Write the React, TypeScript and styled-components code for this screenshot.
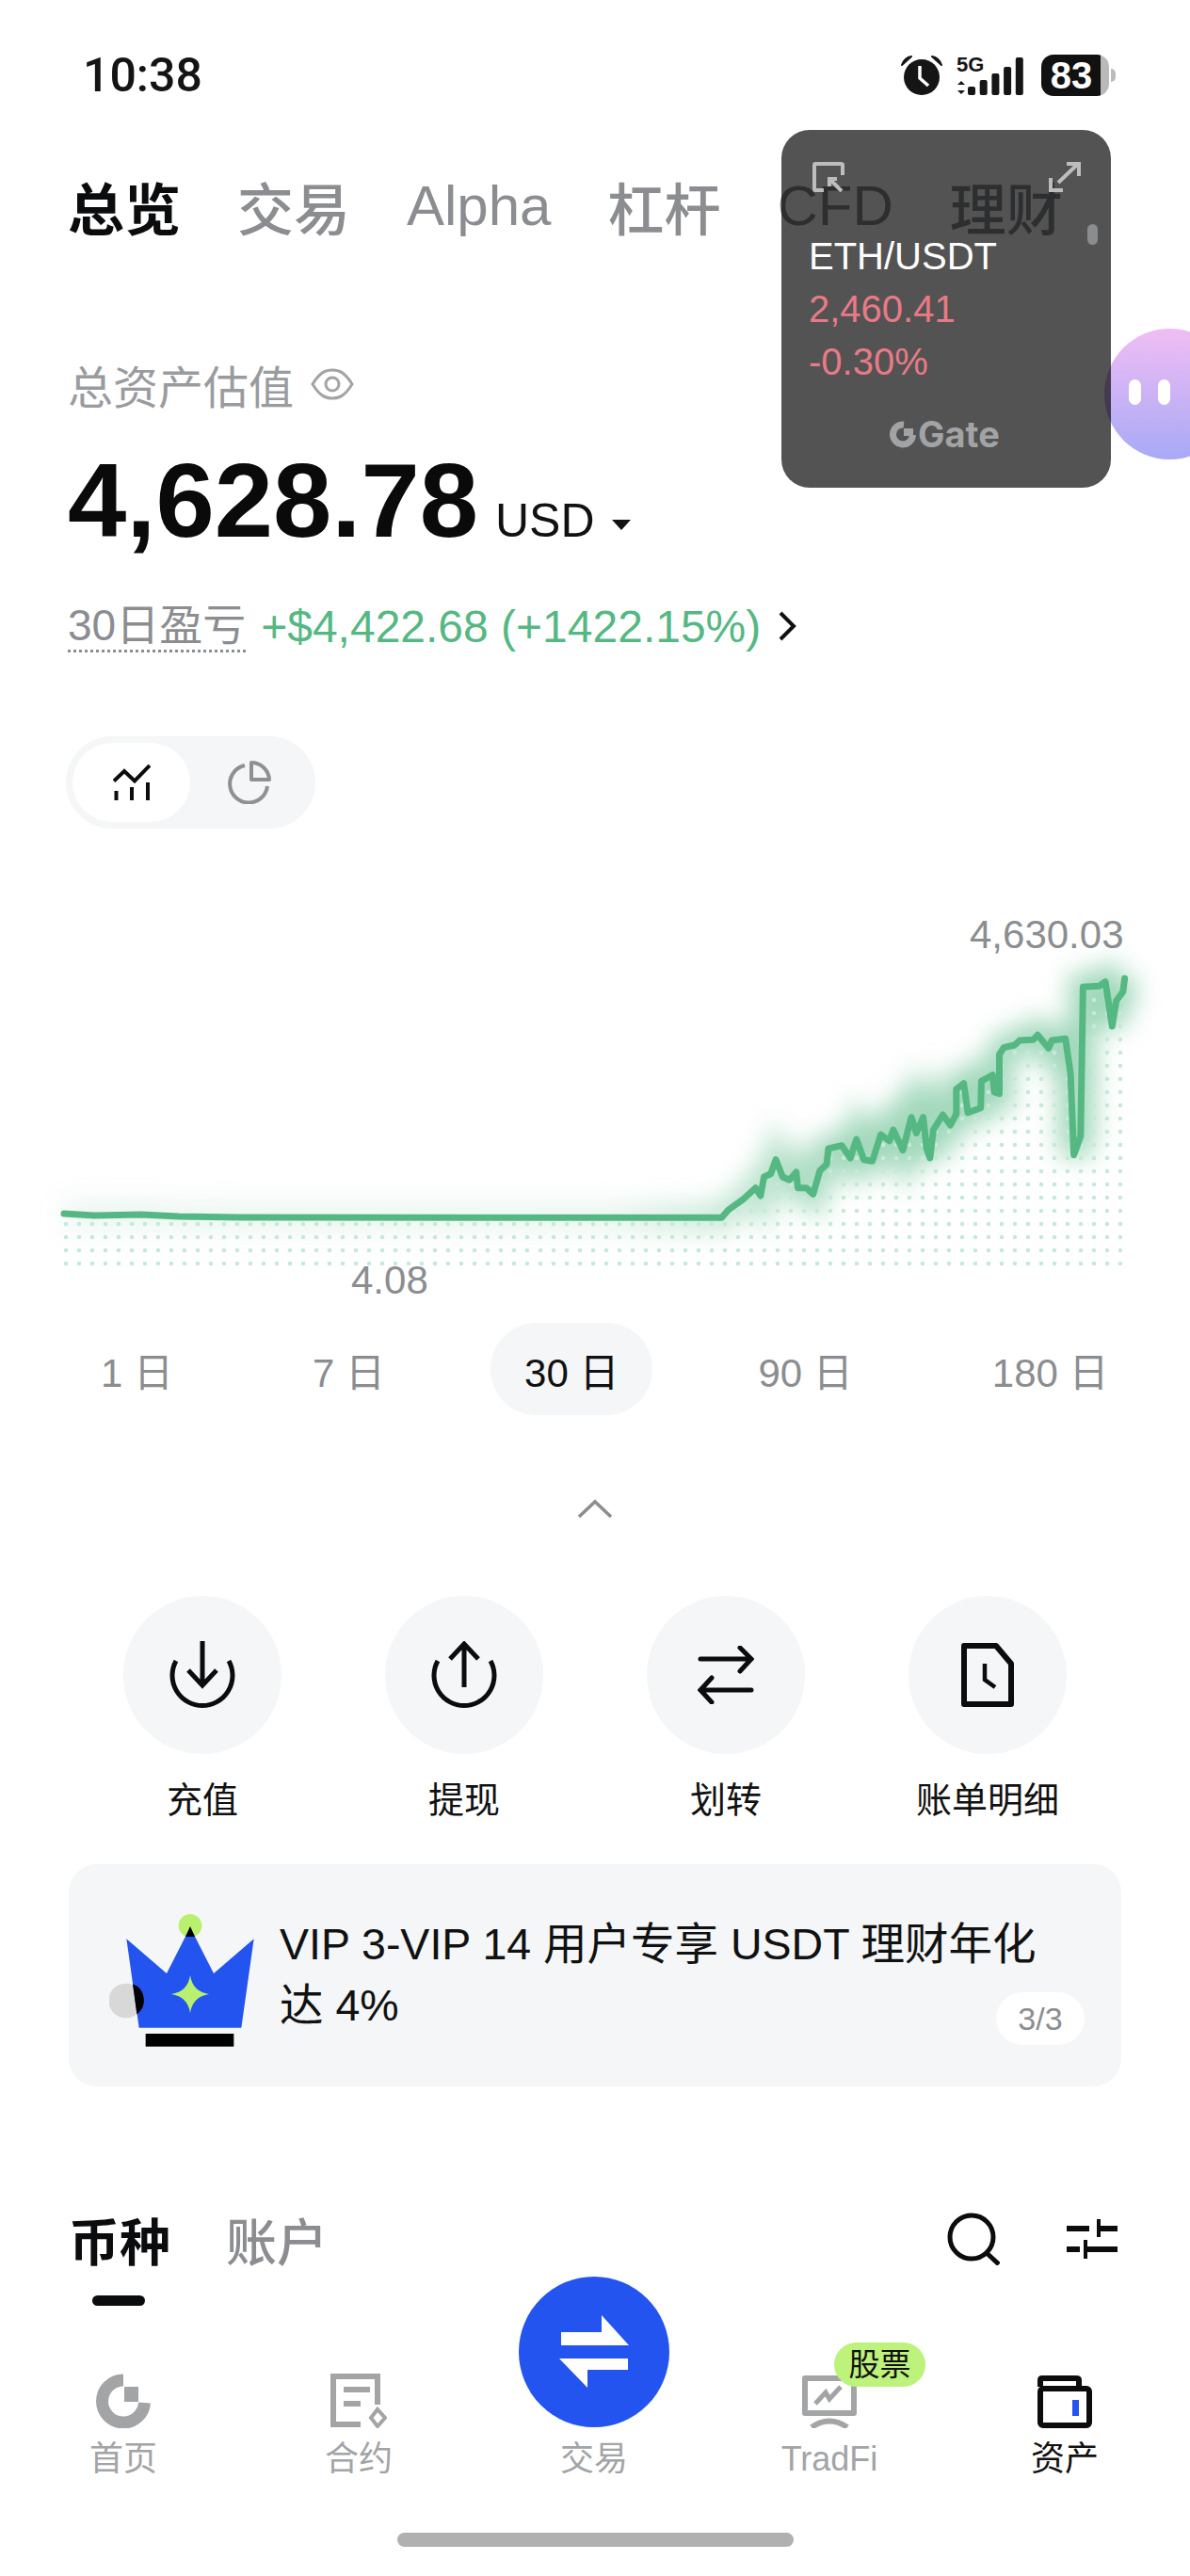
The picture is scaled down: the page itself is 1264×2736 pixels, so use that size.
import React from "react";
import styled, { createGlobalStyle } from "styled-components";

const SANS = `"Liberation Sans", "Noto Sans CJK SC", sans-serif`;
const GREY = "#8b8d90";
const GREEN = "#55b883";

const GlobalStyle = createGlobalStyle`
  html, body { margin: 0; padding: 0; background: #fff; }
  body { font-family: ${SANS}; color: #0b0c0d; }
  * { box-sizing: border-box; }
`;

const Page = styled.div`
  position: relative;
  width: 1264px;
  height: 2736px;
  overflow: hidden;
  background: #fff;
`;

/* status bar */
const StatusBar = styled.div`
  height: 160px;
  padding: 0 86px 0 88px;
  display: flex;
  align-items: center;
  justify-content: space-between;
`;
const Clock = styled.div`
  font-family: Roboto, sans-serif;
  font-size: 50px;
  font-weight: 500;
  color: #141414;
`;
const StatusIcons = styled.div`
  display: flex;
  align-items: center;
  gap: 15px;
`;
const Battery = styled.div`
  width: 72px;
  height: 44px;
  margin-left: 3px;
  position: relative;
  display: flex;
  align-items: center;
  justify-content: center;
  padding-right: 8px;
  border-radius: 13px;
  font-size: 40px;
  font-weight: 700;
  color: #fff;
  background: linear-gradient(to right, #111 88%, #b9b9b9 88%);
  &::after {
    content: "";
    position: absolute;
    right: -7px;
    top: 15px;
    width: 5px;
    height: 14px;
    border-radius: 0 6px 6px 0;
    background: #bbb;
  }
`;

/* top tabs */
const TopTabs = styled.div`
  display: flex;
  gap: 60px;
  margin-top: 20px;
  padding-left: 72px;
  height: 76px;
  align-items: center;
`;
const TopTab = styled.div<{ $active?: boolean }>`
  font-size: 60px;
  font-weight: ${(p) => (p.$active ? 700 : 500)};
  color: ${(p) => (p.$active ? "#0b0c0d" : GREY)};
  white-space: nowrap;
`;

/* totals */
const Summary = styled.div`
  padding-left: 72px;
  margin-top: 122px;
`;
const TotalLabel = styled.div`
  display: flex;
  align-items: center;
  gap: 18px;
  height: 60px;
  font-size: 48px;
  color: #999b9e;
`;
const AmountRow = styled.div`
  display: flex;
  align-items: baseline;
  margin-top: 38px;
  height: 112px;
  line-height: 112px;
`;
const Amount = styled.div`
  font-size: 112px;
  font-weight: 700;
  color: #0a0a0a;
`;
const Currency = styled.div`
  margin-left: 18px;
  font-size: 50px;
  color: #111;
`;
const Caret = styled.i`
  display: inline-block;
  margin-left: 18px;
  width: 0;
  height: 0;
  border-left: 10px solid transparent;
  border-right: 10px solid transparent;
  border-top: 11px solid #111;
  position: relative;
  top: -7px;
`;
const PnlRow = styled.div`
  display: flex;
  align-items: center;
  height: 60px;
  margin-top: 47px;
  gap: 16px;
`;
const PnlLabel = styled.div`
  font-size: 46px;
  line-height: 52px;
  color: ${GREY};
  border-bottom: 3px dotted ${GREY};
`;
const PnlValue = styled.div`
  font-size: 48px;
  font-weight: 500;
  color: ${GREEN};
`;

/* chart / pie toggle */
const ViewToggle = styled.div`
  display: flex;
  align-items: center;
  width: 265px;
  height: 98px;
  margin: 87px 0 0 70px;
  padding: 7px;
  border-radius: 49px;
  background: #f4f6f7;
`;
const ToggleOption = styled.div<{ $active?: boolean }>`
  width: 125px;
  height: 84px;
  border-radius: 42px;
  display: flex;
  align-items: center;
  justify-content: center;
  background: ${(p) => (p.$active ? "#fff" : "transparent")};
`;

/* chart */
const ChartBox = styled.div`
  position: relative;
  height: 430px;
  margin-top: 80px;
`;
const ChartSvg = styled.svg`
  display: block;
`;
const ChartLabel = styled.div<{ $left: number; $top: number }>`
  position: absolute;
  left: ${(p) => p.$left}px;
  top: ${(p) => p.$top}px;
  font-size: 42px;
  line-height: 48px;
  color: ${GREY};
`;

const RangeRow = styled.div`
  display: flex;
  gap: 76px;
  padding-left: 71px;
  margin-top: 15px;
`;
const RangeItem = styled.div<{ $active?: boolean }>`
  height: 98px;
  padding: 0 36px;
  border-radius: 49px;
  display: flex;
  align-items: center;
  font-size: 42px;
  white-space: pre;
  color: ${(p) => (p.$active ? "#111" : GREY)};
  background: ${(p) => (p.$active ? "#f4f6f7" : "transparent")};
`;
const CollapseRow = styled.div`
  display: flex;
  justify-content: center;
  margin-top: 88px;
  height: 32px;
`;

/* quick actions */
const Actions = styled.div`
  display: grid;
  grid-template-columns: repeat(4, 278px);
  padding-left: 76px;
  margin-top: 72px;
`;
const Action = styled.div`
  display: flex;
  flex-direction: column;
  align-items: center;
`;
const ActionCircle = styled.div`
  width: 168px;
  height: 168px;
  border-radius: 50%;
  background: #f4f6f7;
  display: flex;
  align-items: center;
  justify-content: center;
`;
const ActionLabel = styled.div`
  margin-top: 26px;
  font-size: 38px;
  line-height: 46px;
  color: #111;
`;

/* promo banner */
const Banner = styled.div`
  position: relative;
  display: flex;
  align-items: flex-start;
  gap: 27px;
  width: 1118px;
  height: 236px;
  margin: 45px 0 0 73px;
  padding: 53px 30px 0 43px;
  border-radius: 30px;
  background: #f4f6f7;
`;
const BannerText = styled.div`
  font-size: 46.5px;
  line-height: 65px;
  color: #111;
`;
const PageBadge = styled.div`
  position: absolute;
  right: 39px;
  top: 136px;
  width: 94px;
  height: 56px;
  border-radius: 28px;
  background: #fff;
  display: flex;
  align-items: center;
  justify-content: center;
  font-size: 34px;
  color: ${GREY};
`;

/* coin / account tabs */
const ListHeader = styled.div`
  display: flex;
  align-items: center;
  justify-content: space-between;
  height: 68px;
  margin-top: 128px;
  padding: 0 77px 0 73px;
`;
const ListTabs = styled.div`
  display: flex;
  gap: 59px;
`;
const ListTab = styled.div<{ $active?: boolean }>`
  position: relative;
  font-size: 54px;
  font-weight: ${(p) => (p.$active ? 700 : 500)};
  color: ${(p) => (p.$active ? "#0b0c0d" : GREY)};
  ${(p) =>
    p.$active &&
    `&::after {
      content: "";
      position: absolute;
      left: 25px;
      bottom: -31px;
      width: 56px;
      height: 11px;
      border-radius: 6px;
      background: #0b0c0d;
    }`}
`;
const ListTools = styled.div`
  display: flex;
  align-items: center;
  gap: 71px;
`;

/* bottom tab bar */
const TabBar = styled.div`
  position: absolute;
  left: 0;
  bottom: 0;
  width: 100%;
  height: 320px;
`;
const TabGrid = styled.div`
  display: grid;
  grid-template-columns: repeat(5, 250px);
  padding-left: 6px;
  align-items: end;
  height: 218px;
`;
const TabItem = styled.div<{ $active?: boolean }>`
  position: relative;
  display: flex;
  flex-direction: column;
  align-items: center;
  font-size: 36px;
  line-height: 44px;
  color: ${(p) => (p.$active ? "#111" : "#a2a4a6")};
`;
const TabIcon = styled.div`
  height: 63px;
  margin-bottom: 11px;
  display: flex;
  align-items: flex-end;
`;
const TradeButton = styled.div`
  width: 160px;
  height: 160px;
  margin-bottom: 12px;
  border-radius: 50%;
  background: #2354f0;
  display: flex;
  align-items: center;
  justify-content: center;
`;
const StockBadge = styled.div`
  position: absolute;
  left: 130px;
  top: -28px;
  width: 97px;
  height: 47px;
  border-radius: 24px;
  background: #bdf27b;
  color: #111;
  font-size: 33px;
  line-height: 47px;
  text-align: center;
`;
const HomeIndicator = styled.div`
  width: 421px;
  height: 15px;
  margin: 56px auto 0;
  border-radius: 8px;
  background: #b0b0b0;
`;

/* floating price window */
const PriceWindow = styled.div`
  position: absolute;
  z-index: 2;
  left: 830px;
  top: 138px;
  width: 350px;
  height: 380px;
  border-radius: 30px;
  background: rgba(0, 0, 0, 0.675);
  padding: 106px 0 0 29px;
`;
const WindowIcons = styled.div`
  position: absolute;
  left: 33px;
  top: 34px;
  width: 285px;
  display: flex;
  justify-content: space-between;
`;
const ScrollThumb = styled.div`
  position: absolute;
  right: 14px;
  top: 100px;
  width: 11px;
  height: 22px;
  border-radius: 6px;
  background: #8b8c8e;
`;
const Pair = styled.div`
  font-size: 40px;
  line-height: 56px;
  color: #fff;
`;
const Price = styled.div<{ $medium?: boolean }>`
  font-size: 40px;
  line-height: 56px;
  font-weight: ${(p) => (p.$medium ? 500 : 400)};
  color: #e87a86;
`;
const WindowBrand = styled.div`
  position: absolute;
  left: 115px;
  top: 300px;
  display: flex;
  align-items: center;
  gap: 1px;
  font-family: Inter, sans-serif;
  font-size: 38px;
  font-weight: 700;
  line-height: 46px;
  color: #a2a3a5;
`;

/* assistant bubble at the screen edge */
const Bubble = styled.div`
  position: absolute;
  z-index: 1;
  left: 1173px;
  top: 349px;
  width: 139px;
  height: 139px;
  border-radius: 50%;
  background: linear-gradient(#f0bdf4, #a8a9f6);
  display: flex;
  gap: 18px;
  padding: 54px 0 0 26px;
`;
const BubbleEye = styled.i`
  display: block;
  width: 13px;
  height: 27px;
  border-radius: 7px;
  background: #fff;
`;

/* --- drawings --- */
const AlarmIcon = () => (
  <svg width="44" height="42" viewBox="0 0 44 42">
    <circle cx="22" cy="23" r="19" fill="#151515" />
    <path d="M1 10 Q4 2 11 1 Z M43 10 Q40 2 33 1 Z" fill="#151515" stroke="#151515" strokeWidth="2" strokeLinejoin="round" />
    <path d="M20 11 V24 L29 32" fill="none" stroke="#fff" strokeWidth="3.5" />
  </svg>
);

const SignalIcon = () => (
  <svg width="72" height="42" viewBox="0 0 72 42">
    <text x="0" y="17" fontFamily="Liberation Sans" fontWeight="700" fontSize="22" fill="#151515">5G</text>
    <path d="M5 27 L9 31 H1 Z M5 41 L9 37 H1 Z" fill="#151515" />
    {[0, 1, 2, 3, 4].map((i) => (
      <rect key={i} x={12 + i * 12.7} y={33 - i * 7 - (i === 4 ? 3 : 0)} width="8" height={9 + i * 7 + (i === 4 ? 3 : 0)} rx="2" fill="#151515" />
    ))}
  </svg>
);

const EyeIcon = () => (
  <svg width="46" height="34" viewBox="0 0 46 34" fill="none" stroke="#a2a4a6" strokeWidth="3">
    <path d="M2 17 C10 4 16 2 23 2 C30 2 36 4 44 17 C36 30 30 32 23 32 C16 32 10 30 2 17 Z" />
    <circle cx="23" cy="17" r="7" />
  </svg>
);

const LineChartIcon = () => (
  <svg width="40" height="38" viewBox="0 0 40 38" fill="none" stroke="#0b0c0d" strokeWidth="4">
    <path d="M1 17.5 L12 7 L23 17.5 L39 1" />
    <path d="M3.5 28 V38 M20 24 V38 M37 19 V38" />
  </svg>
);

const PieIcon = () => (
  <svg width="46" height="46" viewBox="0 0 46 46" fill="none" stroke="#8e9092" strokeWidth="4">
    <path d="M18 5 A20 20 0 1 0 42 27" />
    <path d="M25 2 V20 H44 A19 19 0 0 0 25 2 Z" strokeLinejoin="round" />
  </svg>
);

const DepositIcon = () => (
  <svg width="70" height="72" viewBox="0 0 70 72" fill="none" stroke="#0b0c0d" strokeWidth="5">
    <path d="M7 21 A32 32 0 1 0 63 21" />
    <path d="M35 0 V46 M20 31 L35 47 L50 31" />
  </svg>
);

const WithdrawIcon = () => (
  <svg width="70" height="72" viewBox="0 0 70 72" fill="none" stroke="#0b0c0d" strokeWidth="5">
    <path d="M7 21 A32 32 0 1 0 63 21" />
    <path d="M35 3 V49 M20 19 L35 3 L50 19" />
  </svg>
);

const TransferIcon = () => (
  <svg width="60" height="62" viewBox="0 0 60 62" fill="none" stroke="#0b0c0d" strokeWidth="5" strokeLinecap="round">
    <path d="M3 14 H57 M45 2 L57 14 L45 27" />
    <path d="M3 47 H57 M15 34 L3 47 L15 60" />
  </svg>
);

const BillIcon = () => (
  <svg width="56" height="68" viewBox="0 0 56 68" fill="none" stroke="#0b0c0d" strokeWidth="6">
    <path d="M3 3 H37 L53 22 V65 H3 Z" strokeLinejoin="round" />
    <path d="M25 22 V39 L36 47" strokeWidth="4.5" />
  </svg>
);

const CrownIcon = () => (
  <svg width="154" height="141" viewBox="47 93 462 423">
    <circle cx="100" cy="369" r="55" fill="#d8d8d8" />
    <circle cx="305" cy="130" r="37" fill="#b9f06f" />
    <path d="M102 172 L230 282 L305 135 L380 282 L508 172 L468 455 L142 455 Z" fill="#2354f0" />
    <path d="M122 316 A55 55 0 0 1 135 412 Z" fill="#000" />
    <path d="M305 132 L320 165 H290 Z" fill="#000" />
    <path d="M305 288 Q313 340 365 348 Q313 356 305 408 Q297 356 245 348 Q297 340 305 288 Z" fill="#b9f06f" />
    <rect x="163" y="474" width="281" height="41" fill="#000" />
  </svg>
);

const SearchIcon = () => (
  <svg width="56" height="56" viewBox="0 0 56 56" fill="none" stroke="#0b0c0d" strokeWidth="5">
    <circle cx="26" cy="26" r="23" />
    <path d="M41 42 L55 55" />
  </svg>
);

const FilterIcon = () => (
  <svg width="54" height="42" viewBox="0 0 54 42" fill="none" stroke="#0b0c0d">
    <path d="M0 10 H24 M34 10 H54 M0 32 H14 M20 32 H54" strokeWidth="6" />
    <path d="M34 0 V19 M20 22 V42" strokeWidth="4" />
  </svg>
);

const HomeTabIcon = () => (
  <svg width="58" height="58" viewBox="0 0 58 58" fill="none">
    <path d="M29 7 A22.5 22.5 0 1 0 51.5 31" stroke="#a2a4a6" strokeWidth="13" />
    <path d="M30 15 H45 V31 H30 Z" fill="#a2a4a6" transform="translate(0 -1)" />
  </svg>
);

const ContractTabIcon = () => (
  <svg width="60" height="58" viewBox="0 0 60 58" fill="none" stroke="#a2a4a6">
    <path d="M50 33 V3 H3 V54 H32" strokeWidth="6" />
    <path d="M14 17 H42 M14 32 H32" strokeWidth="6" />
    <path d="M50 38 L58 47 L50 56 L43 47 Z" strokeWidth="4" />
  </svg>
);

const TradFiTabIcon = () => (
  <svg width="58" height="56" viewBox="0 0 58 56" fill="none" stroke="#a2a4a6">
    <path d="M55 40 H3 V3 H55 Z" strokeWidth="6" strokeLinejoin="round" />
    <path d="M14 30 L25 18 L29 25 L41 12" strokeWidth="5" />
    <path d="M10 55 Q29 42 48 55" strokeWidth="6" />
  </svg>
);

const WalletTabIcon = () => (
  <svg width="58" height="56" viewBox="0 0 58 56" fill="none">
    <path d="M3 12 V5 Q3 3 5 3 H41 Q44 3 44 5 V12" stroke="#0b0c0d" strokeWidth="6" />
    <rect x="3" y="14" width="52" height="39" rx="3" stroke="#0b0c0d" strokeWidth="6" />
    <rect x="37" y="26" width="7" height="17" fill="#2354f0" />
  </svg>
);

const ShrinkIcon = () => (
  <svg width="34" height="32" viewBox="0 0 34 32" fill="none" stroke="#bdbdbd" strokeWidth="4">
    <path d="M12 30 H3 Q2 30 2 29 V3 Q2 2 3 2 H30 Q32 2 32 3 V14" />
    <path d="M18 18 L31 31 M18 26 V18 H26" />
  </svg>
);

const ExpandIcon = () => (
  <svg width="34" height="32" viewBox="0 0 34 32" fill="none" stroke="#bdbdbd" strokeWidth="4">
    <path d="M10 22 L30 3 M19 2 H32 V15" />
    <path d="M2 17 V30 H15" />
  </svg>
);

const GateMark = () => (
  <svg width="29" height="30" viewBox="0 0 29 30" fill="none">
    <path d="M15 5 A10.5 10.5 0 1 0 24.5 16" stroke="#a2a3a5" strokeWidth="7" />
    <rect x="15" y="9" width="10" height="8" fill="#a2a3a5" />
  </svg>
);

const SAMPLES: [number, number][] = [
  [185, 1000], [205, 975], [250, 940], [285, 905], [300, 930], [310, 870], [330, 860], [345, 815],
  [365, 870], [385, 880], [405, 855], [410, 905], [435, 905], [455, 925], [475, 850], [495, 830],
  [500, 780], [540, 770], [565, 810], [583, 750], [605, 815], [630, 820], [655, 735], [680, 755],
  [692, 720], [720, 785], [745, 680], [760, 730], [780, 680], [790, 780], [800, 810], [810, 720],
  [838, 672], [860, 705], [878, 670], [878, 590], [900, 572], [912, 665], [950, 650], [952, 565],
  [985, 545], [990, 600], [1005, 605], [1005, 480], [1018, 458], [1050, 450], [1065, 435], [1105, 433],
  [1118, 418], [1150, 460], [1160, 435], [1200, 430], [1215, 540], [1225, 800], [1245, 740], [1252, 265],
  [1300, 262], [1318, 248], [1338, 390], [1350, 310], [1370, 280], [1375, 238],
];
const FLAT: [number, number][] = [[68, 329], [100, 331], [150, 330], [190, 332], [260, 333]];
const CURVE = [...FLAT, ...SAMPLES.map(([x, y]): [number, number] => [700 + x / 2.78, y / 3])];
const LINE = CURVE.map(([x, y]) => `${x.toFixed(1)},${y.toFixed(1)}`).join(" ");

const AssetChart = () => (
  <ChartSvg width="1264" height="430" viewBox="0 0 1264 430">
    <defs>
      <pattern id="dots" x="1183" y="375" width="14" height="14" patternUnits="userSpaceOnUse">
        <circle cx="7" cy="7" r="2.3" fill="#c6e9d8" />
      </pattern>
      <clipPath id="under">
        <polygon points={`${LINE} 1197,388 68,388`} />
      </clipPath>
      <linearGradient id="glow" gradientUnits="userSpaceOnUse" x1="640" y1="0" x2="900" y2="0">
        <stop offset="0" stopColor={GREEN} stopOpacity="0.12" />
        <stop offset="1" stopColor={GREEN} stopOpacity="0.55" />
      </linearGradient>
      <filter id="soft" x="-10%" y="-30%" width="120%" height="160%">
        <feGaussianBlur stdDeviation="13" />
      </filter>
    </defs>
    <polyline points={LINE} fill="none" stroke="url(#glow)" strokeWidth="30" filter="url(#soft)" />
    <rect x="60" y="0" width="1140" height="390" fill="url(#dots)" clipPath="url(#under)" />
    <polyline points={LINE} fill="none" stroke={GREEN} strokeWidth="7" strokeLinejoin="round" strokeLinecap="round" />
  </ChartSvg>
);

const TOP_TABS = ["总览", "交易", "Alpha", "杠杆", "CFD", "理财"];
const RANGES = ["1 日", "7 日", "30 日", "90 日", "180 日"];

export default function App() {
  return (
    <Page>
      <GlobalStyle />
      <StatusBar>
        <Clock>10:38</Clock>
        <StatusIcons>
          <AlarmIcon />
          <SignalIcon />
          <Battery>83</Battery>
        </StatusIcons>
      </StatusBar>

      <TopTabs>
        {TOP_TABS.map((tab, i) => (
          <TopTab key={tab} $active={i === 0}>{tab}</TopTab>
        ))}
      </TopTabs>

      <Summary>
        <TotalLabel>
          总资产估值 <EyeIcon />
        </TotalLabel>
        <AmountRow>
          <Amount>4,628.78</Amount>
          <Currency>USD</Currency>
          <Caret />
        </AmountRow>
        <PnlRow>
          <PnlLabel>30日盈亏</PnlLabel>
          <PnlValue>+$4,422.68 (+1422.15%)</PnlValue>
          <svg width="24" height="34" viewBox="0 0 24 34" fill="none" stroke="#111" strokeWidth="4">
            <path d="M5 3 L19 17 L5 31" />
          </svg>
        </PnlRow>
      </Summary>

      <ViewToggle>
        <ToggleOption $active><LineChartIcon /></ToggleOption>
        <ToggleOption><PieIcon /></ToggleOption>
      </ViewToggle>

      <ChartBox>
        <AssetChart />
        <ChartLabel $left={1030} $top={9}>4,630.03</ChartLabel>
        <ChartLabel $left={373} $top={376}>4.08</ChartLabel>
      </ChartBox>

      <RangeRow>
        {RANGES.map((r) => (
          <RangeItem key={r} $active={r === "30 日"}>{r}</RangeItem>
        ))}
      </RangeRow>

      <CollapseRow>
        <svg width="38" height="22" viewBox="0 0 38 22" fill="none" stroke="#8b8d90" strokeWidth="3.5">
          <path d="M2 20 L19 4 L36 20" />
        </svg>
      </CollapseRow>

      <Actions>
        <Action>
          <ActionCircle><DepositIcon /></ActionCircle>
          <ActionLabel>充值</ActionLabel>
        </Action>
        <Action>
          <ActionCircle><WithdrawIcon /></ActionCircle>
          <ActionLabel>提现</ActionLabel>
        </Action>
        <Action>
          <ActionCircle><TransferIcon /></ActionCircle>
          <ActionLabel>划转</ActionLabel>
        </Action>
        <Action>
          <ActionCircle><BillIcon /></ActionCircle>
          <ActionLabel>账单明细</ActionLabel>
        </Action>
      </Actions>

      <Banner>
        <CrownIcon />
        <BannerText>
          VIP 3-VIP 14 用户专享 USDT 理财年化
          <br />
          达 4%
        </BannerText>
        <PageBadge>3/3</PageBadge>
      </Banner>

      <ListHeader>
        <ListTabs>
          <ListTab $active>币种</ListTab>
          <ListTab>账户</ListTab>
        </ListTabs>
        <ListTools>
          <SearchIcon />
          <FilterIcon />
        </ListTools>
      </ListHeader>

      <TabBar>
        <TabGrid>
          <TabItem>
            <TabIcon><HomeTabIcon /></TabIcon>
            首页
          </TabItem>
          <TabItem>
            <TabIcon><ContractTabIcon /></TabIcon>
            合约
          </TabItem>
          <TabItem>
            <TradeButton>
              <svg width="160" height="160" viewBox="0 0 160 160" fill="#fff">
                <path d="M88 41 L117 73 H45 V59 H88 Z" />
                <path d="M73 118 L43 87 H116 V99 H73 Z" />
              </svg>
            </TradeButton>
            交易
          </TabItem>
          <TabItem>
            <TabIcon><TradFiTabIcon /></TabIcon>
            <StockBadge>股票</StockBadge>
            TradFi
          </TabItem>
          <TabItem $active>
            <TabIcon><WalletTabIcon /></TabIcon>
            资产
          </TabItem>
        </TabGrid>
        <HomeIndicator />
      </TabBar>

      <Bubble>
        <BubbleEye />
        <BubbleEye />
      </Bubble>

      <PriceWindow>
        <WindowIcons>
          <ShrinkIcon />
          <ExpandIcon />
        </WindowIcons>
        <ScrollThumb />
        <Pair>ETH/USDT</Pair>
        <Price $medium>2,460.41</Price>
        <Price>-0.30%</Price>
        <WindowBrand>
          <GateMark />
          Gate
        </WindowBrand>
      </PriceWindow>
    </Page>
  );
}
